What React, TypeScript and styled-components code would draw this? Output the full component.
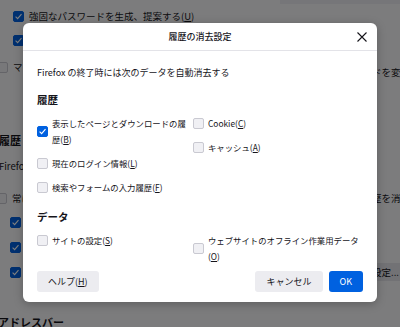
import styled, { createGlobalStyle } from "styled-components";

const GlobalStyle = createGlobalStyle`
  html, body { margin: 0; padding: 0; }
  body {
    width: 400px;
    height: 327px;
    overflow: hidden;
    font-family: "Noto Sans CJK JP", "Noto Sans", sans-serif;
    color: #15141a;
  }
  #root { position: relative; width: 400px; height: 327px; overflow: hidden; }
`;

/* ---------- settings page behind the dialog ---------- */

const Page = styled.div`
  display: flex;
  flex-direction: column;
  width: 400px;
  height: 327px;
  background: #f9f9fb;
  font-size: 9.5px;
`;

const BgRow = styled.div<{ $h: number; $shift?: number; $top?: number }>`
  display: flex;
  align-items: center;
  flex-shrink: 0;
  height: ${(p) => p.$h}px;
  margin-left: ${(p) => p.$shift ?? 0}px;
  margin-top: ${(p) => p.$top ?? 0}px;
  white-space: nowrap;
`;

const BgLeft = styled.div`
  display: flex;
  align-items: center;
  gap: 5px;
  flex: 1;
  min-width: 0;
  overflow: hidden;
`;

const BgHeading = styled.div`
  font-size: 11px;
  font-weight: 700;
`;

const BgRight = styled.div<{ $button?: boolean; $drop?: number }>`
  flex-shrink: 0;
  width: 28px;
  overflow: hidden;
  margin-top: ${(p) => p.$drop ?? 0}px;
  padding: 2px 0;
  background: ${(p) => (p.$button ? "#e4e4ea" : "transparent")};
`;

const TopStrip = styled.div`
  margin-left: 280px;
  flex: 1;
  height: 4px;
  background: #ededf2;
`;

/* ---------- checkbox ---------- */

const BoxShell = styled.span<{ $checked?: boolean; $size: number }>`
  display: inline-flex;
  align-items: center;
  justify-content: center;
  flex-shrink: 0;
  box-sizing: border-box;
  width: ${(p) => p.$size}px;
  height: ${(p) => p.$size}px;
  border-radius: 2px;
  background: ${(p) => (p.$checked ? "#0061e0" : "#f0f0f4")};
  border: 1px solid ${(p) => (p.$checked ? "#0061e0" : "#c9c9d1")};
`;

function Check({ checked, size = 11 }: { checked?: boolean; size?: number }) {
  return (
    <BoxShell $checked={checked} $size={size}>
      {checked && (
        <svg width={size - 2} height={size - 2} viewBox="0 0 9 9">
          <path d="M1.6 4.7 L3.6 6.6 L7.5 2.1" fill="none" stroke="#fff" strokeWidth="1.1" />
        </svg>
      )}
    </BoxShell>
  );
}

/* ---------- dialog ---------- */

const Backdrop = styled.div`
  position: absolute;
  inset: 0;
  background: rgba(0, 0, 0, 0.5);
`;

const Dialog = styled.div`
  position: absolute;
  left: 23px;
  top: 23px;
  width: 354px;
  background: #fff;
  border-radius: 6px;
  box-shadow: 0 2px 10px rgba(0, 0, 0, 0.25);
  display: flex;
  flex-direction: column;
  overflow: hidden;
`;

const Header = styled.div`
  display: grid;
  grid-template-columns: 1fr auto 1fr;
  align-items: center;
  height: 27px;
  border-bottom: 1px solid #e3e3e8;
  font-size: 9px;
`;

const Title = styled.div`
  grid-column: 2;
  font-weight: 500;
`;

const CloseBtn = styled.button`
  grid-column: 3;
  justify-self: end;
  margin-right: 9px;
  width: 12px;
  height: 12px;
  padding: 0;
  border: none;
  background: transparent;
  display: flex;
  align-items: center;
  justify-content: center;
`;

const Body = styled.div`
  display: flex;
  flex-direction: column;
  padding: 14px 14px 10px;
`;

const Intro = styled.div`
  font-size: 9px;
  line-height: 16px;
`;

const SectionTitle = styled.div<{ $top: number }>`
  margin-top: ${(p) => p.$top}px;
  font-size: 10.5px;
  font-weight: 700;
  line-height: 16px;
`;

const Grid = styled.div`
  display: grid;
  grid-template-columns: 156px 1fr;
  align-items: start;
  margin-top: 7px;
`;

const Column = styled.div`
  display: flex;
  flex-direction: column;
  gap: 8px;
`;

const Item = styled.label`
  display: flex;
  align-items: center;
  gap: 4px;
  font-size: 8.4px;
  line-height: 16px;
`;

const Footer = styled.div`
  display: flex;
  align-items: center;
  margin-top: 7px;
  gap: 6px;
`;

const Button = styled.button<{ $primary?: boolean }>`
  height: 21px;
  padding: 0 11px;
  border: none;
  border-radius: 3px;
  font-family: inherit;
  font-size: 9px;
  color: ${(p) => (p.$primary ? "#fff" : "#15141a")};
  background: ${(p) => (p.$primary ? "#0061e0" : "#ececf0")};
`;

const Spacer = styled.div`
  flex: 1;
`;

function CheckItem({ checked, children }: { checked?: boolean; children: React.ReactNode }) {
  return (
    <Item>
      <Check checked={checked} />
      <span>{children}</span>
    </Item>
  );
}

export default function App() {
  return (
    <>
      <GlobalStyle />
      <Page>
        <BgRow $h={4}>
          <TopStrip />
        </BgRow>
        <BgRow $h={24} $shift={13}>
          <BgLeft>
            <Check checked size={11} />
            <span>
              強固なパスワードを生成、提案する(<u>U</u>)
            </span>
          </BgLeft>
        </BgRow>
        <BgRow $h={25} $shift={13}>
          <BgLeft>
            <Check checked size={11} />
            <span>ウェブサイトのパスワード漏洩を警告する</span>
          </BgLeft>
        </BgRow>
        <BgRow $h={28} $shift={-3}>
          <BgLeft>
            <Check size={11} />
            <span>マスターパスワードを使用する</span>
          </BgLeft>
          <BgRight $drop={10}>ドを変更...</BgRight>
        </BgRow>
        <BgRow $h={18} $top={50} $shift={-1}>
          <BgHeading>履歴</BgHeading>
        </BgRow>
        <BgRow $h={18} $top={8} $shift={-1}>
          <span>Firefox の履歴の記憶:</span>
        </BgRow>
        <BgRow $h={20} $top={13} $shift={-4}>
          <BgLeft>
            <Check size={11} />
            <span>常にプライベートブラウジングモード</span>
          </BgLeft>
          <BgRight>歴を消去...</BgRight>
        </BgRow>
        <BgRow $h={24} $top={2} $shift={10}>
          <BgLeft>
            <Check checked size={11} />
            <span>表示したページとダウンロードの履歴を残す</span>
          </BgLeft>
        </BgRow>
        <BgRow $h={26} $shift={10}>
          <BgLeft>
            <Check checked size={11} />
            <span>検索やフォームの入力履歴を記憶する</span>
          </BgLeft>
        </BgRow>
        <BgRow $h={24} $shift={10}>
          <BgLeft>
            <Check checked size={11} />
            <span>Firefox の終了時に履歴を消去する</span>
          </BgLeft>
          <BgRight $button>設定...</BgRight>
        </BgRow>
        <BgRow $h={18} $top={29} $shift={-2}>
          <BgHeading>アドレスバー</BgHeading>
        </BgRow>
      </Page>

      <Backdrop />

      <Dialog>
        <Header>
          <Title>履歴の消去設定</Title>
          <CloseBtn aria-label="閉じる">
            <svg width="10" height="10" viewBox="0 0 10 10">
              <path d="M0.5 0.5 L9.5 9.5 M9.5 0.5 L0.5 9.5" stroke="#15141a" strokeWidth="1.1" />
            </svg>
          </CloseBtn>
        </Header>
        <Body>
          <Intro>Firefox の終了時には次のデータを自動消去する</Intro>

          <SectionTitle $top={11}>履歴</SectionTitle>
          <Grid>
            <Column>
              <CheckItem checked>
                表示したページとダウンロードの履歴(<u>B</u>)
              </CheckItem>
              <CheckItem>
                現在のログイン情報(<u>L</u>)
              </CheckItem>
              <CheckItem>
                検索やフォームの入力履歴(<u>F</u>)
              </CheckItem>
            </Column>
            <Column>
              <CheckItem>
                Cookie(<u>C</u>)
              </CheckItem>
              <CheckItem>
                キャッシュ(<u>A</u>)
              </CheckItem>
            </Column>
          </Grid>

          <SectionTitle $top={14}>データ</SectionTitle>
          <Grid>
            <Column>
              <CheckItem>
                サイトの設定(<u>S</u>)
              </CheckItem>
            </Column>
            <Column>
              <CheckItem>
                ウェブサイトのオフライン作業用データ(<u>O</u>)
              </CheckItem>
            </Column>
          </Grid>

          <Footer>
            <Button>
              ヘルプ(<u>H</u>)
            </Button>
            <Spacer />
            <Button>キャンセル</Button>
            <Button $primary>OK</Button>
          </Footer>
        </Body>
      </Dialog>
    </>
  );
}
